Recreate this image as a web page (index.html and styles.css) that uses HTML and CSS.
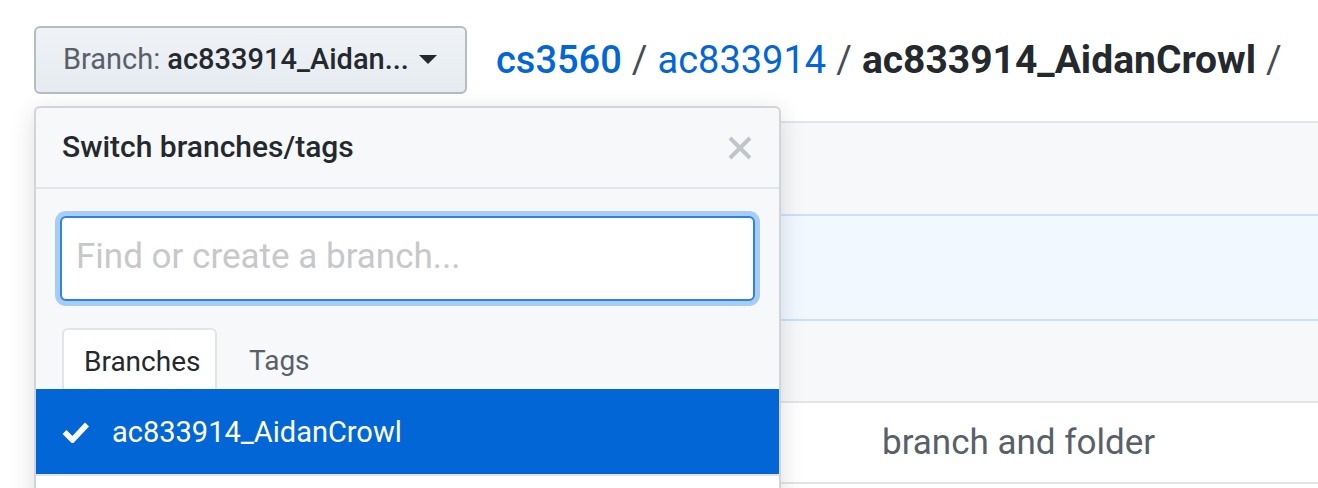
FILE: index.html
```html
<!DOCTYPE html>
<html>
<head>
<meta charset="utf-8">
<link rel="stylesheet" href="styles.css">
</head>
<body>
<div class="page">
  <div class="nav">
    <button class="branch-btn">
      <span class="lbl">Branch:</span>
      <span class="name">ac833914_Aidan...</span>
      <span class="caret"></span>
    </button>
    <div class="crumbs">
      <a class="root">cs3560</a><span class="sep">/</span><a class="dir">ac833914</a><span class="sep">/</span><strong class="final">ac833914_AidanCrowl</strong><span class="sep">/</span>
    </div>
  </div>

  <div class="content">
    <div class="row row-gray r1"></div>
    <div class="row row-blue"></div>
    <div class="row row-gray r3"></div>
    <div class="row row-white"><span class="msg">branch and folder</span></div>
  </div>

  <div class="dropdown">
    <div class="dd-header">
      <span class="dd-title">Switch branches/tags</span>
      <svg class="close" width="26" height="26" viewBox="0 0 26 26"><path d="M3 3 L23 23 M23 3 L3 23" stroke="#c1c4c8" stroke-width="4" fill="none"/></svg>
    </div>
    <div class="dd-filter">
      <div class="input">Find or create a branch...</div>
    </div>
    <div class="tabs">
      <div class="tab active">Branches</div>
      <div class="tab">Tags</div>
    </div>
    <div class="item selected">
      <svg class="check" width="28" height="22" viewBox="0 0 28 22"><path d="M2.5 11 L10.5 19 L25 3.5" stroke="#fff" stroke-width="5.5" fill="none" stroke-linejoin="miter"/></svg>
      <span>ac833914_AidanCrowl</span>
    </div>
    <div class="item blank"></div>
  </div>
</div>
</body>
</html>
```

FILE: styles.css
```css
html, body {
  margin: 0;
  padding: 0;
  background: #fff;
  overflow: hidden;
}
body {
  width: 1318px;
  height: 488px;
  font-family: "Roboto", "Noto Sans", sans-serif;
  color: #24292e;
}
.page {
  position: relative;
  padding: 26px 0 0 34px;
}
.nav {
  display: flex;
  align-items: center;
  height: 68px;
}
.branch-btn {
  box-sizing: border-box;
  width: 433px;
  height: 68px;
  border: 2px solid #b7bcc1;
  border-radius: 6px;
  background: linear-gradient(#eff3f6, #e6ebf1);
  display: flex;
  align-items: center;
  padding: 0 0 2px 27px;
  font-family: inherit;
  font-size: 29px;
}
.branch-btn .lbl {
  color: #586069;
  font-weight: 400;
  margin-right: 7px;
}
.branch-btn .name {
  color: #24292e;
  font-weight: 500;
}
.caret {
  width: 0;
  height: 0;
  border-left: 9px solid transparent;
  border-right: 9px solid transparent;
  border-top: 9px solid #24292e;
  margin-left: 10px;
}
.crumbs {
  margin-left: 29px;
  font-size: 38px;
  color: #24292e;
  display: flex;
  align-items: baseline;
}
.crumbs a {
  color: #0366d6;
  text-decoration: none;
}
.crumbs .root { font-weight: 500; }
.crumbs .sep {
  margin: 0 10px;
  color: #444d56;
}
.crumbs .final {
  font-weight: 700;
  font-size: 39px;
}

.content {
  margin-top: 27px;
  border-top: 2px solid #e1e4e8;
  border-bottom: 2px solid #e1e4e8;
}
.row { box-sizing: border-box; }
.row-gray { background: #f6f8fa; }
.r1 { height: 91px; }
.row-blue {
  background: #f1f8ff;
  border-top: 2px solid #c8e1ff;
  border-bottom: 2px solid #c8e1ff;
  height: 107px;
}
.r3 {
  height: 82px;
  border-bottom: 2px solid #e1e4e8;
}
.row-white {
  height: 79px;
  display: flex;
  align-items: center;
  padding-left: 848px;
}
.msg {
  font-size: 35px;
  color: #586069;
}

.dropdown {
  position: absolute;
  left: 34px;
  top: 106px;
  width: 747px;
  height: 420px;
  box-sizing: border-box;
  border: 2px solid #d1d5da;
  border-radius: 6px;
  background: #f6f8fa;
  box-shadow: 0 6px 24px rgba(27,31,35,0.15);
  overflow: hidden;
}
.dd-header {
  height: 81px;
  box-sizing: border-box;
  border-bottom: 2px solid #e1e4e8;
  display: flex;
  align-items: center;
  justify-content: space-between;
  padding: 0 26px 2px 26px;
}
.dd-title {
  font-size: 30px;
  font-weight: 500;
  color: #24292e;
}
.close { margin-top: 2px; }
.dd-filter {
  padding: 27px 24px 27px 24px;
}
.input {
  box-sizing: border-box;
  height: 85px;
  border: 2px solid #2f81e4;
  border-radius: 6px;
  background: #fff;
  box-shadow: 0 0 0 5px #a8cdf5;
  display: flex;
  align-items: center;
  padding: 0 0 4px 14px;
  font-size: 35px;
  color: #c6c8ca;
}
.tabs {
  display: flex;
  padding-left: 26px;
  height: 61px;
  align-items: flex-end;
}
.tab {
  box-sizing: border-box;
  height: 61px;
  display: flex;
  align-items: center;
  padding: 4px 22px 0 22px;
  font-size: 28px;
  color: #586069;
  font-weight: 400;
}
.tab.active {
  background: #fff;
  border: 2px solid #e1e4e8;
  border-bottom: none;
  border-radius: 6px 6px 0 0;
  color: #24292e;
  width: 155px;
  padding-left: 20px;
}
.tab + .tab { padding-left: 32px; }
.item {
  height: 85px;
  display: flex;
  align-items: center;
  padding-left: 26px;
  font-size: 29px;
}
.item.selected {
  background: #0366d6;
  color: #fff;
}
.check { margin-right: 22px; }
.item.blank {
  background: #fff;
  border-top: 2px solid #e1e4e8;
}
```
